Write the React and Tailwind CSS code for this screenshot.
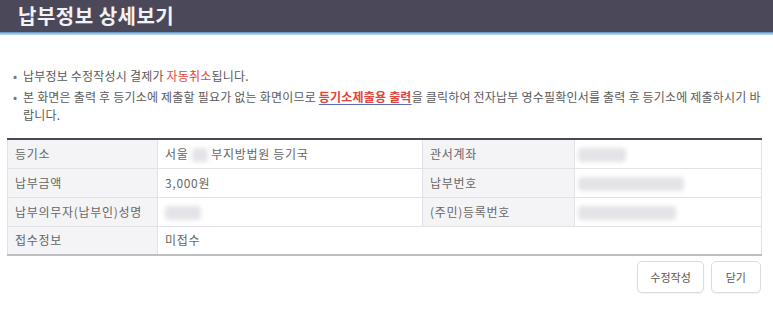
import React from 'react';

const font = { fontFamily: '"Noto Sans CJK KR", "Noto Sans", sans-serif' };

function Redacted({ w }) {
  return <span className={`inline-block h-[14px] ${w} align-middle rounded-sm bg-[#e4e4e8] blur-[2px]`}></span>;
}

const th = 'bg-[#f4f4f6] border-x border-[#e2e2e6] text-left font-normal pl-[7px]';
const td = 'border-x border-[#e2e2e6] pl-[7px]';

export default function App() {
  return (
    <div className="w-[773px] h-[316px] bg-white overflow-hidden text-[#5a5a5a]" style={font}>
      {/* title bar */}
      <div className="h-[32px] bg-[#4a4859] flex items-center pl-[18px]">
        <h1 className="text-[20px] font-bold text-[#f2f2f4] tracking-[0.5px]">납부정보 상세보기</h1>
      </div>
      <div className="h-[3px] bg-gradient-to-b from-[#5a8fc8] to-[#cfe3f5]"></div>

      {/* notice */}
      <ul className="mt-[32px] pl-[13px] pr-[6px] text-[12px] leading-[18px] tracking-[0.2px] flex flex-col gap-[3px]">
        <li className="flex">
          <span className="w-[10px] shrink-0 text-[#777]">•</span>
          <span>
            납부정보 수정작성시 결제가 <span className="text-[#e4433b]">자동취소</span>됩니다.
          </span>
        </li>
        <li className="flex">
          <span className="w-[10px] shrink-0 text-[#777]">•</span>
          <span className="break-all">
            본 화면은 출력 후 등기소에 제출할 필요가 없는 화면이므로{' '}
            <span className="text-[#e4433b] font-semibold underline decoration-[#5a6ec0] underline-offset-2">등기소제출용 출력</span>을 클릭하여 전자납부 영수필확인서를 출력 후 등기소에 제출하시기 바랍니다.
          </span>
        </li>
      </ul>

      {/* detail table */}
      <div className="mx-[7px] mt-[14px] w-[755px]">
        <table className="w-full border-collapse text-[12px] tracking-[0.7px] text-[#666] border-t-2 border-t-[#4a4859] border-b-2 border-b-[#bdbdc4]">
          <colgroup>
            <col className="w-[150px]" />
            <col className="w-[265px]" />
            <col className="w-[152px]" />
            <col />
          </colgroup>
          <tbody>
            <tr className="h-[29px] border-b border-[#e2e2e6]">
              <th className={th}>등기소</th>
              <td className={td}>
                서울 <Redacted w="w-[16px]" /> 부지방법원 등기국
              </td>
              <th className={th}>관서계좌</th>
              <td className="border-x border-[#e2e2e6] pl-[3px]"><Redacted w="w-[48px]" /></td>
            </tr>
            <tr className="h-[29px] border-b border-[#e2e2e6]">
              <th className={th}>납부금액</th>
              <td className={td}>3,000원</td>
              <th className={th}>납부번호</th>
              <td className="border-x border-[#e2e2e6] pl-[3px]"><Redacted w="w-[106px]" /></td>
            </tr>
            <tr className="h-[29px] border-b border-[#e2e2e6]">
              <th className={th}>납부의무자(납부인)성명</th>
              <td className={td}><Redacted w="w-[36px]" /></td>
              <th className={th}>(주민)등록번호</th>
              <td className="border-x border-[#e2e2e6] pl-[3px]"><Redacted w="w-[98px]" /></td>
            </tr>
            <tr className="h-[29px]">
              <th className={th}>접수정보</th>
              <td colSpan={3} className={td}>미접수</td>
            </tr>
          </tbody>
        </table>
      </div>

      {/* buttons */}
      <div className="flex justify-end gap-[7px] pr-[12px] mt-[5px]">
        <button className="h-[32px] px-[12px] rounded-[5px] border border-[#dcdce0] bg-white text-[11px] text-[#555] shadow-[0_1px_1px_rgba(0,0,0,0.05)]">수정작성</button>
        <button className="h-[32px] px-[14px] rounded-[5px] border border-[#dcdce0] bg-white text-[11px] text-[#555] shadow-[0_1px_1px_rgba(0,0,0,0.05)]">닫기</button>
      </div>
    </div>
  );
}
